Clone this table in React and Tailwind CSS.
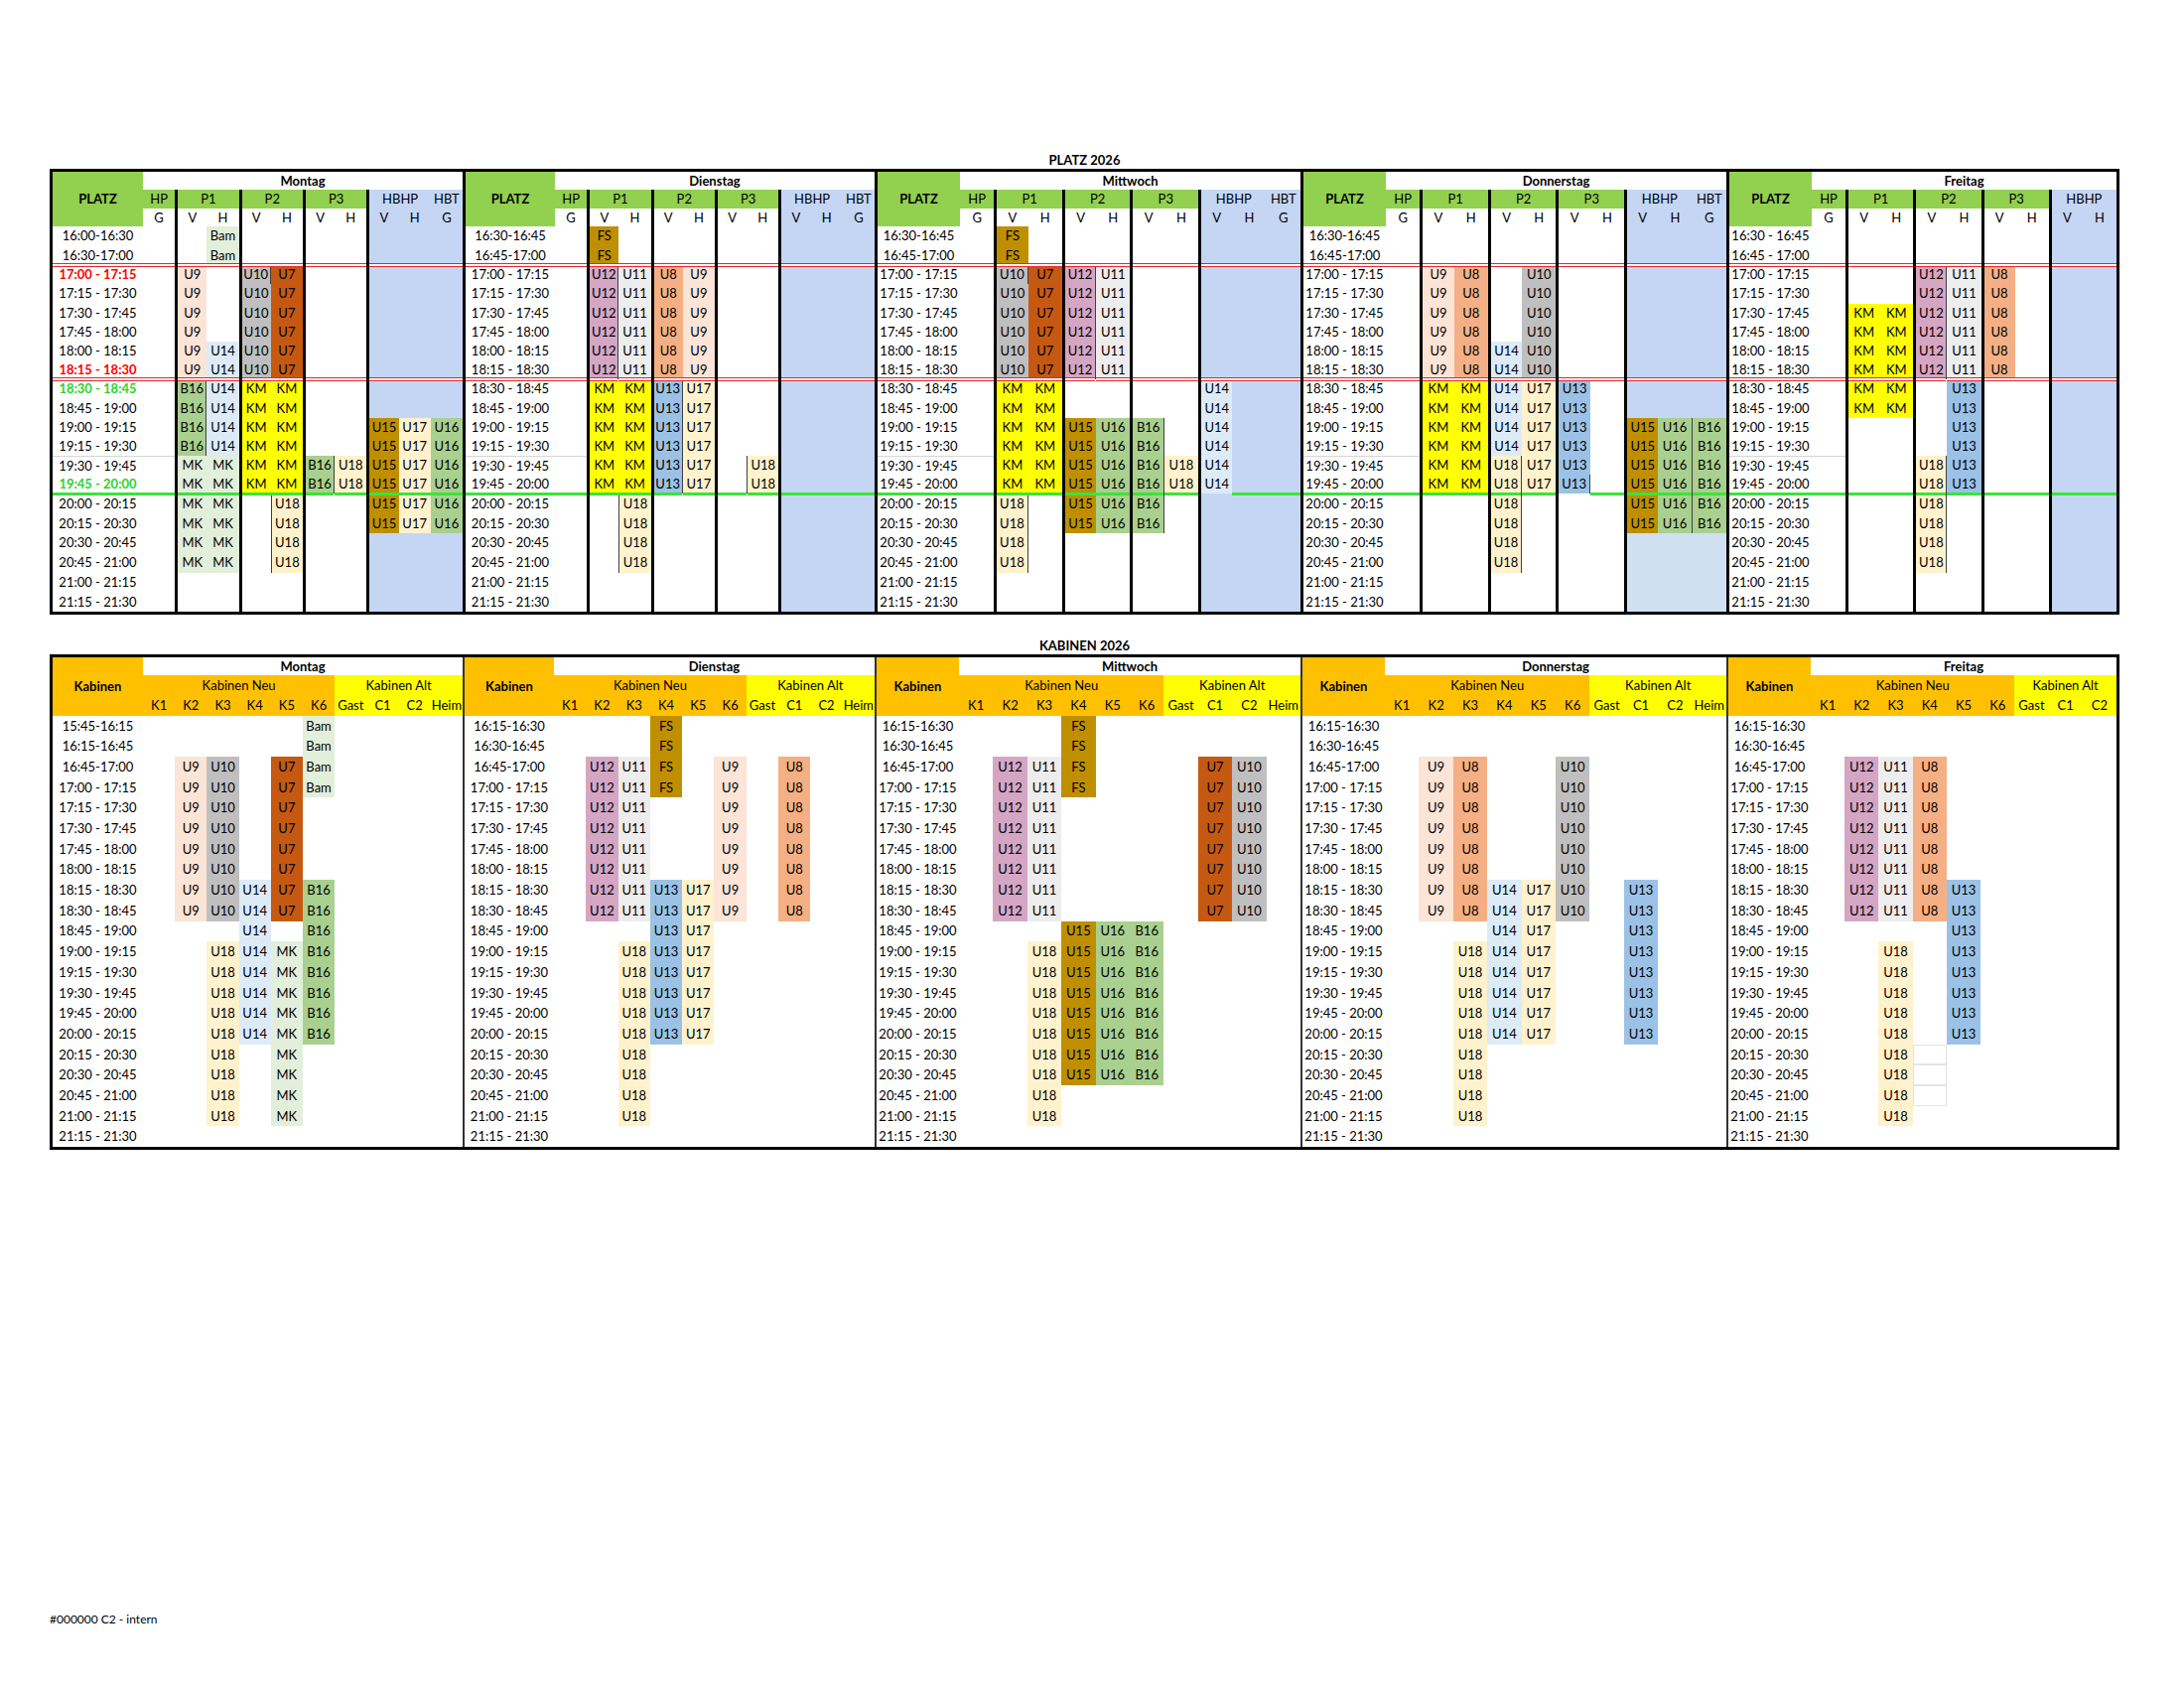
import React from "react";

// fill colours of the Excel plan
const BG = {
  Bam: "bg-[#e2efda]",
  MK: "bg-[#e2efda]",
  U9: "bg-[#fce4d6]",
  U10: "bg-[#bfbfbf]",
  U7: "bg-[#c65911]",
  U14: "bg-[#ddebf7]",
  B16: "bg-[#a9d08e]",
  KM: "bg-[#ffff00]",
  U18: "bg-[#fff2cc]",
  U17: "bg-[#fff2cc]",
  U15: "bg-[#bf8f00]",
  U16: "bg-[#a9d08e]",
  FS: "bg-[#bf8f00]",
  U12: "bg-[#d5a6c4]",
  U11: "bg-[#ededed]",
  U8: "bg-[#f4b084]",
  U13: "bg-[#9bc2e6]",
};

const fmt = (m) => `${String(Math.floor(m / 60)).padStart(2, "0")}:${String(m % 60).padStart(2, "0")}`;
const slots = (start, count) =>
  Array.from({ length: count }, (_, i) => `${fmt(start + i * 15)} - ${fmt(start + i * 15 + 15)}`);
const late = slots(17 * 60, 18);

// entries: [col, fromRow, toRow, label, flags]
function buildGrid(rows, cols, entries) {
  const g = Array.from({ length: rows }, () => Array.from({ length: cols }, () => null));
  for (const [c, a, b, t, f] of entries) {
    for (let r = a; r <= b; r++) g[r][c] = { t, f: f || "" };
  }
  return g;
}

const PLATZ_DAYS = [
  {
    name: "Montag",
    wrap: "w-[413px] grid-cols-[91px_repeat(10,minmax(0,1fr))]",
    n: 10,
    marked: true,
    times: ["16:00-16:30", "16:30-17:00", ...late],
    data: [
      [2, 0, 1, "Bam"],
      [1, 2, 7, "U9"],
      [3, 2, 7, "U10"],
      [3, 2, 2, "U10", "r"],
      [4, 2, 7, "U7"],
      [2, 6, 11, "U14"],
      [1, 8, 11, "B16", "r"],
      [3, 8, 13, "KM"],
      [4, 8, 13, "KM"],
      [7, 10, 15, "U15"],
      [8, 10, 15, "U17"],
      [9, 10, 15, "U16"],
      [1, 12, 17, "MK"],
      [2, 12, 17, "MK"],
      [5, 12, 13, "B16", "r"],
      [6, 12, 13, "U18"],
      [4, 14, 17, "U18", "l"],
    ],
  },
  {
    name: "Dienstag",
    wrap: "w-[415px] grid-cols-[90px_repeat(10,minmax(0,1fr))] border-l-[3px] border-l-black",
    n: 10,
    times: ["16:30-16:45", "16:45-17:00", ...late],
    data: [
      [1, 0, 1, "FS"],
      [1, 2, 7, "U12", "r"],
      [2, 2, 7, "U11"],
      [3, 2, 7, "U8"],
      [4, 2, 7, "U9"],
      [1, 8, 13, "KM"],
      [2, 8, 13, "KM"],
      [3, 8, 13, "U13", "r"],
      [4, 8, 13, "U17"],
      [6, 12, 13, "U18", "l"],
      [2, 14, 17, "U18", "l"],
    ],
  },
  {
    name: "Mittwoch",
    wrap: "w-[429px] grid-cols-[83px_repeat(10,minmax(0,1fr))] border-l-[3px] border-l-black",
    n: 10,
    noGreen: [7],
    times: ["16:30-16:45", "16:45-17:00", ...late],
    data: [
      [1, 0, 1, "FS"],
      [1, 2, 7, "U10"],
      [1, 2, 2, "U10", "r"],
      [2, 2, 7, "U7"],
      [3, 2, 7, "U12", "r"],
      [4, 2, 7, "U11"],
      [1, 8, 13, "KM"],
      [2, 8, 13, "KM"],
      [7, 8, 13, "U14"],
      [3, 10, 15, "U15"],
      [4, 10, 15, "U16"],
      [5, 10, 15, "B16", "r"],
      [6, 12, 13, "U18"],
      [1, 14, 17, "U18", "r"],
    ],
  },
  {
    name: "Donnerstag",
    wrap: "w-[429px] grid-cols-[83px_repeat(10,minmax(0,1fr))] border-l-[3px] border-l-black",
    n: 10,
    noGreen: [5],
    lightFrom: 16,
    times: ["16:30-16:45", "16:45-17:00", ...late],
    data: [
      [1, 2, 7, "U9"],
      [2, 2, 7, "U8"],
      [4, 2, 7, "U10"],
      [3, 6, 11, "U14"],
      [1, 8, 13, "KM"],
      [2, 8, 13, "KM"],
      [4, 8, 13, "U17"],
      [5, 8, 13, "U13"],
      [5, 13, 13, "U13", "r"],
      [7, 10, 15, "U15"],
      [8, 10, 15, "U16", "r"],
      [9, 10, 15, "B16"],
      [3, 12, 17, "U18", "r"],
    ],
  },
  {
    name: "Freitag",
    wrap: "w-[393px] grid-cols-[83px_repeat(9,minmax(0,1fr))] border-l-[3px] border-l-black",
    n: 9,
    times: ["16:30 - 16:45", "16:45 - 17:00", ...late],
    data: [
      [3, 2, 7, "U12", "r"],
      [4, 2, 7, "U11"],
      [5, 2, 7, "U8"],
      [1, 4, 9, "KM"],
      [2, 4, 9, "KM"],
      [4, 8, 13, "U13"],
      [3, 12, 17, "U18", "r"],
    ],
  },
];

const kabLate = slots(17 * 60, 18);
const KAB_DAYS = [
  {
    name: "Montag",
    wrap: "w-[413px] grid-cols-[91px_repeat(10,minmax(0,1fr))]",
    n: 10,
    times: ["15:45-16:15", "16:15-16:45", "16:45-17:00", ...kabLate],
    data: [
      [5, 0, 3, "Bam"],
      [1, 2, 9, "U9"],
      [2, 2, 9, "U10"],
      [4, 2, 9, "U7"],
      [3, 8, 15, "U14"],
      [5, 8, 15, "B16"],
      [2, 11, 19, "U18"],
      [4, 11, 19, "MK"],
    ],
  },
  {
    name: "Dienstag",
    wrap: "w-[415px] grid-cols-[90px_repeat(10,minmax(0,1fr))] border-l-2 border-l-[#333]",
    n: 10,
    times: ["16:15-16:30", "16:30-16:45", "16:45-17:00", ...kabLate],
    data: [
      [3, 0, 3, "FS"],
      [1, 2, 9, "U12"],
      [2, 2, 9, "U11"],
      [5, 2, 9, "U9"],
      [7, 2, 9, "U8"],
      [3, 8, 15, "U13"],
      [4, 8, 15, "U17"],
      [2, 11, 19, "U18"],
    ],
  },
  {
    name: "Mittwoch",
    wrap: "w-[429px] grid-cols-[83px_repeat(10,minmax(0,1fr))] border-l-2 border-l-[#333]",
    n: 10,
    times: ["16:15-16:30", "16:30-16:45", "16:45-17:00", ...kabLate],
    data: [
      [3, 0, 3, "FS"],
      [1, 2, 9, "U12"],
      [2, 2, 9, "U11"],
      [7, 2, 9, "U7"],
      [8, 2, 9, "U10"],
      [3, 10, 17, "U15"],
      [4, 10, 17, "U16"],
      [5, 10, 17, "B16"],
      [2, 11, 19, "U18"],
    ],
  },
  {
    name: "Donnerstag",
    wrap: "w-[429px] grid-cols-[83px_repeat(10,minmax(0,1fr))] border-l-2 border-l-[#333]",
    n: 10,
    times: ["16:15-16:30", "16:30-16:45", "16:45-17:00", ...kabLate],
    data: [
      [1, 2, 9, "U9"],
      [2, 2, 9, "U8"],
      [5, 2, 9, "U10"],
      [3, 8, 15, "U14"],
      [4, 8, 15, "U17"],
      [7, 8, 15, "U13"],
      [2, 11, 19, "U18"],
    ],
  },
  {
    name: "Freitag",
    wrap: "w-[393px] grid-cols-[83px_repeat(9,minmax(0,1fr))] border-l-2 border-l-[#333]",
    n: 9,
    times: ["16:15-16:30", "16:30-16:45", "16:45-17:00", ...kabLate],
    data: [
      [1, 2, 9, "U12"],
      [2, 2, 9, "U11"],
      [3, 2, 9, "U8"],
      [4, 8, 15, "U13"],
      [2, 11, 19, "U18"],
      [3, 16, 18, "", "box"],
    ],
  },
];

const center = "flex items-center justify-center whitespace-nowrap leading-none";
const thickL = "border-l-[3px] border-l-black";

// separator lines sit on the row boundary, over the cells
function RedMark() {
  return (
    <span className="absolute inset-x-0 bottom-[-2px] z-10 h-[4px] border-y-[1.5px] border-y-[#e3262b] bg-white" />
  );
}
function GreenMark() {
  return <span className="absolute inset-x-0 bottom-[-1.5px] z-10 h-[3px] bg-[#3ce33c]" />;
}

function PlatzDay({ day }) {
  const g = buildGrid(20, day.n, day.data);
  const thick = [1, 3, 5, 7];
  const blue = "bg-[#c5d6f5]";
  const cells = [];

  cells.push(
    <div key="lab" className={`row-span-3 bg-[#92d050] font-bold ${center}`}>
      PLATZ
    </div>
  );
  cells.push(
    <div key="day" className={`${day.n === 10 ? "col-span-10" : "col-span-9"} bg-white font-bold ${center}`}>
      {day.name}
    </div>
  );
  cells.push(<div key="hp" className={`bg-[#92d050] ${center}`}>HP</div>);
  cells.push(<div key="p1" className={`col-span-2 bg-[#92d050] ${thickL} ${center}`}>P1</div>);
  cells.push(<div key="p2" className={`col-span-2 bg-[#92d050] ${thickL} ${center}`}>P2</div>);
  cells.push(<div key="p3" className={`col-span-2 bg-[#92d050] ${thickL} ${center}`}>P3</div>);
  cells.push(<div key="hb" className={`col-span-2 ${blue} ${thickL} ${center}`}>HBHP</div>);
  if (day.n === 10) cells.push(<div key="hbt" className={`${blue} ${center}`}>HBT</div>);

  ["G", "V", "H", "V", "H", "V", "H", "V", "H", "G"].slice(0, day.n).forEach((s, i) => {
    cells.push(
      <div key={`s${i}`} className={`${i >= 7 ? blue : "bg-white"} ${thick.includes(i) ? thickL : ""} ${center}`}>
        {s}
      </div>
    );
  });

  const mark = (r, c) => {
    if (r === 1 || r === 7) return <RedMark />;
    if (r === 13 && !(day.noGreen || []).includes(c)) return <GreenMark />;
    return null;
  };

  for (let r = 0; r < 20; r++) {
    let labCls = "relative bg-white";
    if (day.marked && (r === 2 || r === 7)) labCls += " text-[#ff0000] font-bold";
    if (day.marked && (r === 8 || r === 13)) labCls += " text-[#2fd22f] font-bold";
    if (r === 12) labCls += " border-t border-t-[#d4d4d4]";
    cells.push(
      <div key={`l${r}`} className={`${labCls} ${center}`}>
        {day.times[r]}
        {mark(r, -1)}
      </div>
    );
    for (let c = 0; c < day.n; c++) {
      const cell = g[r][c];
      let bg = "bg-white";
      if (c >= 7) bg = day.lightFrom && r >= day.lightFrom ? "bg-[#cfe1f1]" : blue;
      if (cell) bg = BG[cell.t];
      let cls = `relative ${bg}`;
      if (thick.includes(c)) cls += ` ${thickL}`;
      else if (cell && cell.f.includes("l")) cls += " border-l border-l-[#404040]";
      if (cell && cell.f.includes("r")) cls += " border-r border-r-[#404040]";
      if (r === 12 && c === 0) cls += " border-t border-t-[#d4d4d4]";
      cells.push(
        <div key={`c${r}-${c}`} className={`${cls} ${center}`}>
          {cell ? cell.t : ""}
          {mark(r, c)}
        </div>
      );
    }
  }

  return (
    <div className={`grid shrink-0 grid-rows-[18px_19px_18px_19.6px_19.6px_repeat(12,19.2px)_repeat(6,19.8px)] ${day.wrap}`}>
      {cells}
    </div>
  );
}

function KabinenDay({ day }) {
  const g = buildGrid(21, day.n, day.data);
  const heads = ["K1", "K2", "K3", "K4", "K5", "K6", "Gast", "C1", "C2", "Heim"].slice(0, day.n);
  const cells = [];

  cells.push(
    <div key="lab" className={`row-span-3 bg-[#ffc000] font-bold ${center}`}>
      Kabinen
    </div>
  );
  cells.push(
    <div key="day" className={`${day.n === 10 ? "col-span-10" : "col-span-9"} bg-white font-bold ${center}`}>
      {day.name}
    </div>
  );
  cells.push(<div key="neu" className={`col-span-6 bg-[#ffc000] ${center}`}>Kabinen Neu</div>);
  cells.push(
    <div key="alt" className={`${day.n === 10 ? "col-span-4" : "col-span-3"} bg-[#ffff00] ${center}`}>
      Kabinen Alt
    </div>
  );
  heads.forEach((h, i) => {
    cells.push(
      <div key={`h${i}`} className={`${i < 6 ? "bg-[#ffc000]" : "bg-[#ffff00]"} overflow-hidden ${center}`}>
        {h}
      </div>
    );
  });

  for (let r = 0; r < 21; r++) {
    cells.push(
      <div key={`l${r}`} className={`bg-white ${center}`}>
        {day.times[r]}
      </div>
    );
    for (let c = 0; c < day.n; c++) {
      const cell = g[r][c];
      let cls = "bg-white";
      if (cell && cell.f === "box") cls = "bg-white border border-[#e3e3e3]";
      else if (cell) cls = BG[cell.t];
      cells.push(
        <div key={`c${r}-${c}`} className={`${cls} ${center}`}>
          {cell ? cell.t : ""}
        </div>
      );
    }
  }

  return (
    <div className={`grid shrink-0 grid-rows-[18px_20px_20.5px_repeat(21,20.7px)] ${day.wrap}`}>{cells}</div>
  );
}

export default function App() {
  return (
    <div className="min-h-[1700px] w-[2200px] bg-white font-['Lato','Liberation_Sans',sans-serif] text-[13px] text-black">
      <div className="pl-[50px] pt-[152px]">
        <div className="w-[2085px]">
          <div className="h-[18px] text-center font-bold leading-[18px]">PLATZ 2026</div>
          <div className="flex border-[3px] border-black">
            {PLATZ_DAYS.map((d) => (
              <PlatzDay key={d.name} day={d} />
            ))}
          </div>

          <div className="mt-[22px] h-[18px] text-center font-bold leading-[18px]">KABINEN 2026</div>
          <div className="flex border-[3px] border-black">
            {KAB_DAYS.map((d) => (
              <KabinenDay key={d.name} day={d} />
            ))}
          </div>

          <div className="mt-[465px] text-[12px] leading-[16px]">#000000 C2 - intern</div>
        </div>
      </div>
    </div>
  );
}
